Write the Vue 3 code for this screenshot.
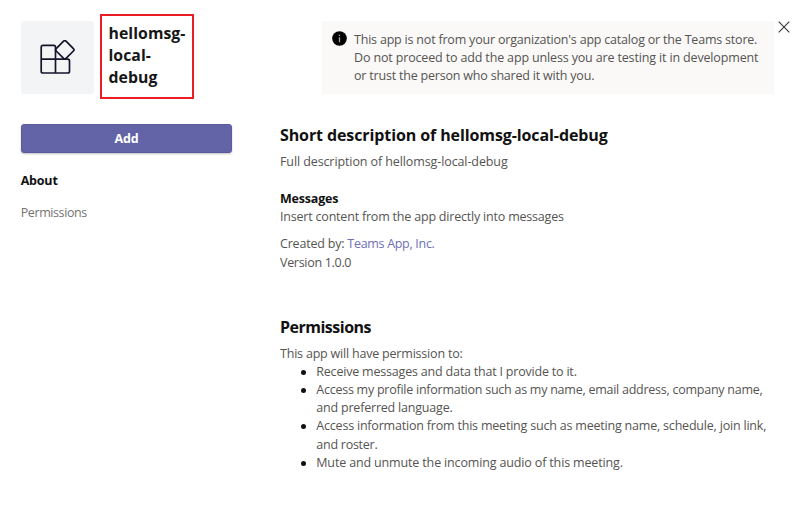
<script setup>
const notice = [
  { text: "This app is not from your organization's app catalog or the Teams store." },
  { text: 'Do not proceed to add the app unless you are testing it in development', fit: 'wide' },
  { text: 'or trust the person who shared it with you.' },
]
const permissions = [
  [{ text: 'Receive messages and data that I provide to it.' }],
  [
    { text: 'Access my profile information such as my name, email address, company name,', fit: 'narrow' },
    { text: 'and preferred language.' },
  ],
  [
    { text: 'Access information from this meeting such as meeting name, schedule, join link,' },
    { text: 'and roster.', fit: 'narrow' },
  ],
  [{ text: 'Mute and unmute the incoming audio of this meeting.', fit: 'wide' }],
]
</script>

<template>
  <main class="dialog">
    <header class="top">
      <div class="app-icon">
        <svg width="36" height="36" viewBox="0 0 36 36" fill="none" stroke="#14142b" stroke-width="1.7" stroke-linejoin="round">
          <path d="M15.2 5.4H4a1.8 1.8 0 0 0-1.8 1.8v24A1.8 1.8 0 0 0 4 33h24.7a1.8 1.8 0 0 0 1.8-1.8V21a1.8 1.8 0 0 0-1.8-1.8H2.2M16.5 33V7.2a1.8 1.8 0 0 0-1.8-1.8" />
          <path d="M24.6 1.2a1.7 1.7 0 0 1 2.4 0l7.4 7.4a1.7 1.7 0 0 1 0 2.4L27 18.4a1.7 1.7 0 0 1-2.4 0L17.2 11a1.7 1.7 0 0 1 0-2.4z" />
        </svg>
      </div>
      <h1 class="name"><span>hellomsg-</span><span>local-</span><span>debug</span></h1>
      <div class="notice">
        <svg class="info" width="15" height="15" viewBox="0 0 15 15">
          <circle cx="7.5" cy="7.5" r="7.3" fill="#000" />
          <path d="M7.5 6.3v4.9M7.5 3.7V5" stroke="#a5a5a5" stroke-width="1.3" />
        </svg>
        <p><span v-for="line in notice" :key="line.text" class="line" :class="line.fit">{{ line.text }}</span></p>
      </div>
      <svg class="close" width="12" height="12" viewBox="0 0 12 12" stroke="#333" stroke-width="1.1">
        <path d="M.7.7l10.6 10.6M11.3.7L.7 11.3" />
      </svg>
    </header>
    <div class="body">
      <aside>
        <button class="add">Add</button>
        <nav><a class="active">About</a><a class="link">Permissions</a></nav>
      </aside>
      <article>
        <h2>Short description of hellomsg-local-debug</h2>
        <p class="full">Full description of hellomsg-local-debug</p>
        <h3>Messages</h3>
        <p>Insert content from the app directly into messages</p>
        <p class="credit">Created by: <a>Teams App, Inc.</a></p>
        <p class="version">Version 1.0.0</p>
        <h2 class="second">Permissions</h2>
        <p>This app will have permission to:</p>
        <ul>
          <li v-for="item in permissions" :key="item[0].text">
            <span v-for="line in item" :key="line.text" class="line" :class="line.fit">{{ line.text }}</span>
          </li>
        </ul>
      </article>
    </div>
  </main>
</template>

<style>
body { background: #fff; }
</style>
<style scoped>
.dialog { width: 800px; height: 509px; overflow: hidden; font-family: "Open Sans", "Noto Sans", sans-serif; font-size: 12.5px; line-height: 18.2px; color: #565452; letter-spacing: -0.2px; }
h1, h2, h3, p, ul { margin: 0; padding: 0; }
.line { display: block; white-space: nowrap; }
.wide { letter-spacing: -0.15px; }
.narrow { letter-spacing: -0.25px; }
.top { display: flex; align-items: flex-start; height: 124px; }
.app-icon { display: flex; align-items: center; justify-content: center; width: 73px; height: 73px; margin: 21px 0 0 20.5px; border-radius: 3px; background: #f3f4f6; }
.name { box-sizing: border-box; width: 94.5px; height: 85px; margin: 14.4px 0 0 6px; padding: 5.6px 0 0 7px; border: 2px solid #ec1c24; font-size: 15.8px; line-height: 22px; letter-spacing: 0.05px; font-weight: 700; color: #171717; }
.name span { display: block; white-space: nowrap; }
.notice { box-sizing: border-box; display: flex; width: 452px; height: 73px; margin: 21px 0 0 128px; padding: 9.6px 0 0 10px; background: #faf9f8; }
.info { margin-right: 7px; }
.close { margin: 21px 0 0 4px; }
.body { display: flex; }
aside { width: 211.5px; margin-left: 20.7px; }
.add { display: block; width: 100%; height: 29px; padding: 0; border: 1px solid #5b5ca0; border-radius: 3px; background: #6264a7; box-shadow: 0 1px 2px rgba(0, 0, 0, .25); color: #fff; font: 700 12.5px/26px "Open Sans", sans-serif; letter-spacing: -0.2px; }
nav { display: flex; flex-direction: column; gap: 14px; padding-top: 19px; color: #757371; }
.active { font-weight: 700; color: #111; }
.link { letter-spacing: -0.4px; }
article { margin-left: 47.8px; }
h2 { font-size: 16px; line-height: 22px; font-weight: 700; color: #111; letter-spacing: -0.1px; margin-bottom: 7px; }
h3 { font-size: 12.5px; line-height: 18px; margin-top: 19px; font-weight: 700; color: #111; }
.full { letter-spacing: -0.1px; }
.credit { margin-top: 9px; }
.credit a { color: #6e70b4; letter-spacing: -0.3px; }
.version { letter-spacing: -0.3px; }
.second { margin-top: 44px; margin-bottom: 6.8px; letter-spacing: -0.5px; }
ul { padding-left: 36.3px; }
li { position: relative; list-style: none; }
li::before { content: ""; position: absolute; left: -15px; top: 7px; width: 5px; height: 5px; border-radius: 50%; background: #111; }
</style>
